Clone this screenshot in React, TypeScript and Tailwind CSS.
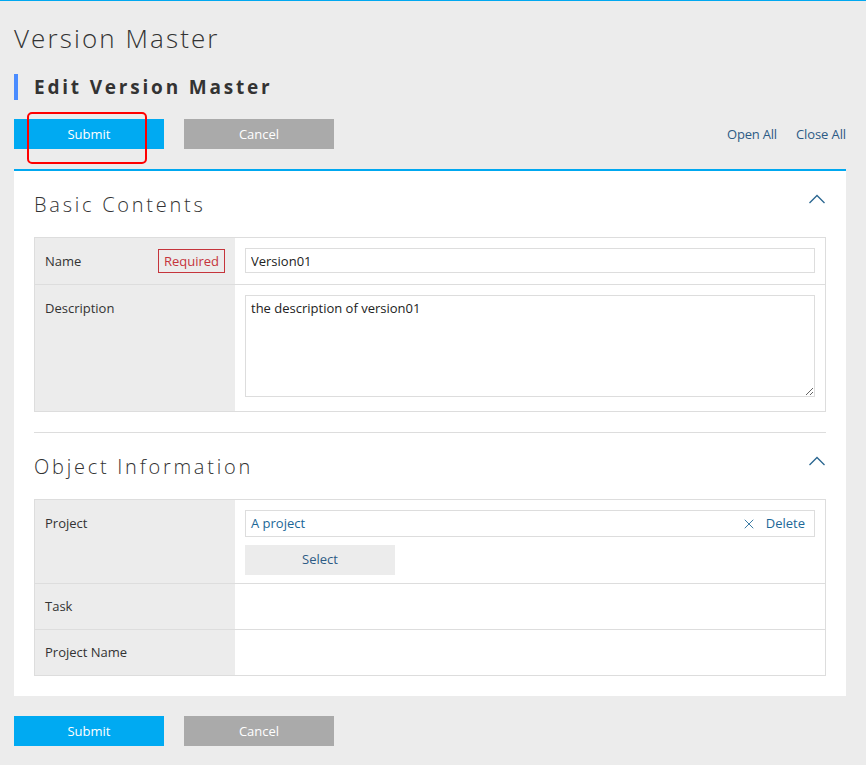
import { X } from "lucide-react";

const font = { fontFamily: '"Open Sans", "Noto Sans", sans-serif' };

function Chevron() {
  return (
    <svg width="16" height="10" viewBox="0 0 16 10" className="self-start mt-[5px] mr-[1px] text-[#2a6690]">
      <polyline points="0.5,9 8,1.5 15.5,9" fill="none" stroke="currentColor" strokeWidth="1.3" />
    </svg>
  );
}

function Buttons() {
  return (
    <div className="flex gap-5">
      <button className="w-[150px] h-[30px] pt-px bg-[#00aaf2] text-white text-[13px]">Submit</button>
      <button className="w-[150px] h-[30px] pt-px bg-[#aaaaaa] text-white text-[13px]">Cancel</button>
    </div>
  );
}

function SectionTitle({ title }: { title: string }) {
  return (
    <div className="flex items-center justify-between h-[32px] mb-[16px]">
      <h3 className="text-[20px] font-light tracking-[2.75px] text-[#333]">{title}</h3>
      <Chevron />
    </div>
  );
}

export default function App() {
  return (
    <div style={font} className="min-h-[765px] bg-[#ececec] border-t border-[#00a8f0] pl-[14px] pr-[20px] pb-[19px] text-[#333]">
      <h1 className="mt-[19px] text-[26px] leading-[36px] font-light tracking-[2.1px] text-[#333]">Version Master</h1>

      <div className="mt-[18px] flex items-center h-[26px]">
        <span className="w-[4px] h-[26px] bg-[#4a8cff]" />
        <h2 className="ml-[16px] text-[19px] font-bold tracking-[2.8px] text-[#333]">Edit Version Master</h2>
      </div>

      <div className="relative mt-[19px] flex items-center justify-between">
        <Buttons />
        <div className="flex gap-[19px] pt-px text-[13px] text-[#2d5b85]">
          <a className="tracking-[-0.2px]">Open All</a>
          <a className="tracking-[-0.1px]">Close All</a>
        </div>
        <span className="absolute left-[13px] top-[-7px] w-[120px] h-[52px] border-2 border-[#f00] rounded-[5px]" />
      </div>

      <div className="mt-[20px] bg-white border-t-2 border-[#00a8f0] px-5 pt-[18px] pb-5">
        <SectionTitle title="Basic Contents" />
        <div className="border border-[#dddddd] text-[13px]">
          <div className="flex border-b border-[#dddddd]">
            <div className="w-[200px] shrink-0 bg-[#ececec] px-[10px] py-[11px] flex items-center justify-between">
              <span className="pt-px">Name</span>
              <span className="border border-[#c5343b] text-[#c5343b] px-[5px] h-[24px] leading-[22px]">Required</span>
            </div>
            <div className="flex-1 p-[10px]">
              <input
                defaultValue="Version01"
                className="w-full h-[25px] border border-[#dddddd] px-[5px] text-[13px] text-[#222] outline-none"
              />
            </div>
          </div>
          <div className="flex">
            <div className="w-[200px] shrink-0 bg-[#ececec] px-[10px] py-[14px]">Description</div>
            <div className="flex-1 p-[10px] pb-[14px]">
              <textarea
                defaultValue="the description of version01"
                className="block w-full h-[102px] border border-[#dddddd] px-[5px] py-[3px] text-[13px] text-[#222] outline-none"
              />
            </div>
          </div>
        </div>

        <div className="mt-[20px] border-t border-[#dddddd] pt-[18px]">
          <SectionTitle title="Object Information" />
        </div>
        <div className="border border-[#dddddd] text-[13px]">
          <div className="flex border-b border-[#dddddd]">
            <div className="w-[200px] shrink-0 bg-[#ececec] px-[10px] py-[14px]">Project</div>
            <div className="flex-1 p-[10px] pb-[8px]">
              <div className="flex items-center justify-between h-[27px] border border-[#dddddd] px-[5px] text-[#1c6797]">
                <span>A project</span>
                <span className="flex items-center gap-[9px] pr-[4px]">
                  <X size={16} strokeWidth={1.3} />
                  Delete
                </span>
              </div>
              <button className="mt-[8px] w-[150px] h-[30px] bg-[#ececec] text-[#2d5b85] text-[13px]">Select</button>
            </div>
          </div>
          <div className="flex border-b border-[#dddddd] h-[46px]">
            <div className="w-[200px] shrink-0 bg-[#ececec] px-[10px] flex items-center">Task</div>
            <div className="flex-1" />
          </div>
          <div className="flex h-[45px]">
            <div className="w-[200px] shrink-0 bg-[#ececec] px-[10px] flex items-center">Project Name</div>
            <div className="flex-1" />
          </div>
        </div>
      </div>

      <div className="mt-[20px]">
        <Buttons />
      </div>
    </div>
  );
}
